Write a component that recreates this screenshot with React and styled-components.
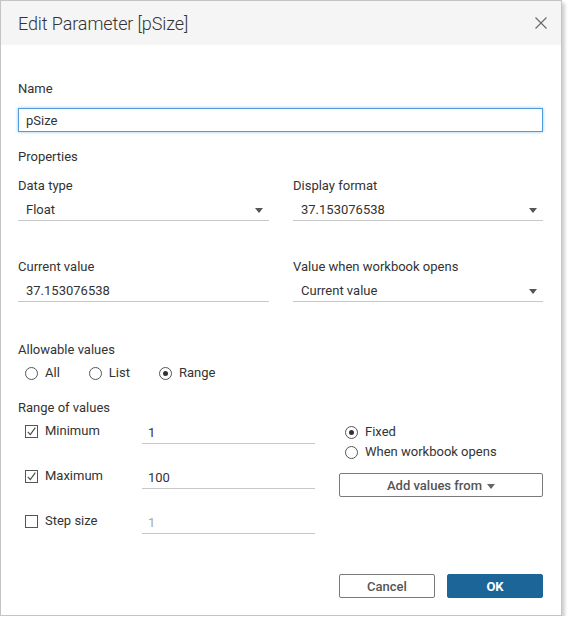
import React from "react";
import styled, { createGlobalStyle } from "styled-components";

const GlobalStyle = createGlobalStyle`
  body {
    margin: 0;
    background: #fff;
    font-family: Roboto, "Liberation Sans", Arial, sans-serif;
    color: #333;
  }
`;

const Dialog = styled.div`
  width: 560px;
  height: 614px;
  border: 1px solid #c4c4c4;
  background: #fff;
  box-shadow: 3px 3px 3px rgba(0, 0, 0, 0.18);
  display: flex;
  flex-direction: column;
`;

const Header = styled.div`
  height: 44px;
  flex: none;
  background: #f5f5f5;
  padding: 0 10px 0 17px;
  display: flex;
  align-items: center;
  justify-content: space-between;
`;

const Title = styled.div`
  font-size: 18px;
  font-weight: 300;
  color: #333;
  letter-spacing: -0.1px;
`;

const CloseButton = styled.button`
  border: 0;
  background: none;
  padding: 0;
  width: 20px;
  height: 20px;
  display: flex;
  align-items: center;
  justify-content: center;
  cursor: pointer;
`;

const Body = styled.div`
  flex: 1;
  padding: 36px 18px 0 17px;
  display: flex;
  flex-direction: column;
`;

const Label = styled.div`
  font-size: 13px;
  line-height: 16px;
  color: #333;
  margin-top: ${(p) => p.top || 0}px;
`;

const TextInput = styled.div`
  margin-top: 11px;
  height: 24px;
  box-sizing: border-box;
  border: 1px solid #4d9de0;
  box-shadow: 0 0 3px rgba(77, 157, 224, 0.6);
  font-size: 13px;
  display: flex;
  align-items: center;
  padding-left: 7px;
`;

const Columns = styled.div`
  display: grid;
  grid-template-columns: 251px 250px;
  column-gap: 24px;
  margin-top: ${(p) => p.top || 0}px;
`;

const Field = styled.div`
  display: flex;
  flex-direction: column;
`;

const Underlined = styled.div`
  margin-top: 4px;
  height: 23px;
  box-sizing: border-box;
  border-bottom: 1px solid #c8c8c8;
  display: flex;
  align-items: center;
  justify-content: space-between;
  padding: 0 6px 0 8px;
  font-size: 13px;
  color: #333;
`;

const Arrow = styled.span`
  width: 0;
  height: 0;
  border-left: 4px solid transparent;
  border-right: 4px solid transparent;
  border-top: 5px solid ${(p) => p.color || "#555"};
  margin-top: 2px;
`;

const RadioRow = styled.div`
  display: flex;
  gap: 29px;
  margin-top: 7px;
  padding-left: 7px;
`;

const Option = styled.label`
  display: flex;
  align-items: center;
  gap: 7px;
  font-size: 13px;
  line-height: 16px;
  color: #333;
`;

const RadioCircle = styled.span`
  width: 13px;
  height: 13px;
  box-sizing: border-box;
  border: 1px solid #555;
  border-radius: 50%;
  display: flex;
  align-items: center;
  justify-content: center;
  &::after {
    content: "";
    display: ${(p) => (p.checked ? "block" : "none")};
    width: 5px;
    height: 5px;
    border-radius: 50%;
    background: #333;
  }
`;

const CheckBox = styled.span`
  width: 13px;
  height: 13px;
  box-sizing: border-box;
  border: 1px solid #555;
  display: flex;
  align-items: center;
  justify-content: center;
`;

const RangeGrid = styled.div`
  display: grid;
  grid-template-columns: 297px 1fr;
  margin-top: 5px;
`;

const RangeLeft = styled.div`
  display: flex;
  flex-direction: column;
`;

const RangeRow = styled.div`
  height: 45px;
  display: grid;
  grid-template-columns: 124px 173px;
`;

const CheckCell = styled.div`
  padding: 2px 0 0 7px;
`;

const InputCell = styled.div`
  height: 23px;
  box-sizing: border-box;
  border-bottom: 1px solid #c8c8c8;
  display: flex;
  align-items: center;
  padding: 1px 0 0 6px;
  font-size: 13px;
  color: ${(p) => (p.muted ? "#a8a8a8" : "#333")};
`;

const RangeRight = styled.div`
  margin-left: 24px;
  display: flex;
  flex-direction: column;
  padding-top: 3px;
`;

const StackOptions = styled.div`
  display: flex;
  flex-direction: column;
  gap: 4px;
  padding-left: 6px;
`;

const OutlineButton = styled.button`
  height: 24px;
  box-sizing: border-box;
  border: 1px solid #7a7a7a;
  border-radius: 2px;
  background: #fff;
  font-family: inherit;
  font-size: 13px;
  color: #555;
  font-weight: 500;
  display: flex;
  align-items: center;
  justify-content: center;
  gap: 5px;
  width: ${(p) => p.width || "auto"};
  margin-top: ${(p) => p.top || 0}px;
  padding: 0;
`;

const PrimaryButton = styled(OutlineButton)`
  background: #1b6598;
  border-color: #1b6598;
  color: #fff;
  font-weight: 700;
`;

const Footer = styled.div`
  margin-top: auto;
  margin-bottom: 17px;
  display: flex;
  justify-content: flex-end;
  gap: 12px;
`;

const Check = () => (
  <svg width="11" height="11" viewBox="0 0 11 11">
    <path d="M1.8 5.8 L4.3 8.6 L9.3 1.6" fill="none" stroke="#444" strokeWidth="1.1" />
  </svg>
);

const rangeRows = [
  { label: "Minimum", value: "1", checked: true },
  { label: "Maximum", value: "100", checked: true },
  { label: "Step size", value: "1", checked: false, muted: true },
];

export default function App() {
  return (
    <>
      <GlobalStyle />
      <Dialog>
        <Header>
          <Title>Edit Parameter [pSize]</Title>
          <CloseButton aria-label="Close">
            <svg width="14" height="14" viewBox="0 0 14 14">
              <path d="M1.5 1.5 L12.5 12.5 M12.5 1.5 L1.5 12.5" stroke="#666" strokeWidth="1.1" />
            </svg>
          </CloseButton>
        </Header>
        <Body>
          <Label>Name</Label>
          <TextInput>pSize</TextInput>

          <Label top={17}>Properties</Label>

          <Columns top={13}>
            <Field>
              <Label>Data type</Label>
              <Underlined>
                Float
                <Arrow />
              </Underlined>
            </Field>
            <Field>
              <Label>Display format</Label>
              <Underlined>
                37.153076538
                <Arrow />
              </Underlined>
            </Field>
          </Columns>

          <Columns top={38}>
            <Field>
              <Label>Current value</Label>
              <Underlined>37.153076538</Underlined>
            </Field>
            <Field>
              <Label>Value when workbook opens</Label>
              <Underlined>
                Current value
                <Arrow />
              </Underlined>
            </Field>
          </Columns>

          <Label top={40}>Allowable values</Label>
          <RadioRow>
            <Option>
              <RadioCircle />
              All
            </Option>
            <Option>
              <RadioCircle />
              List
            </Option>
            <Option>
              <RadioCircle checked />
              Range
            </Option>
          </RadioRow>

          <Label top={19}>Range of values</Label>
          <RangeGrid>
            <RangeLeft>
              {rangeRows.map((r) => (
                <RangeRow key={r.label}>
                  <CheckCell>
                    <Option>
                      <CheckBox>{r.checked && <Check />}</CheckBox>
                      {r.label}
                    </Option>
                  </CheckCell>
                  <InputCell muted={r.muted}>{r.value}</InputCell>
                </RangeRow>
              ))}
            </RangeLeft>
            <RangeRight>
              <StackOptions>
                <Option>
                  <RadioCircle checked />
                  Fixed
                </Option>
                <Option>
                  <RadioCircle />
                  When workbook opens
                </Option>
              </StackOptions>
              <OutlineButton top={13}>
                Add values from
                <Arrow color="#666" />
              </OutlineButton>
            </RangeRight>
          </RangeGrid>

          <Footer>
            <OutlineButton width="96px">Cancel</OutlineButton>
            <PrimaryButton width="96px">OK</PrimaryButton>
          </Footer>
        </Body>
      </Dialog>
    </>
  );
}
